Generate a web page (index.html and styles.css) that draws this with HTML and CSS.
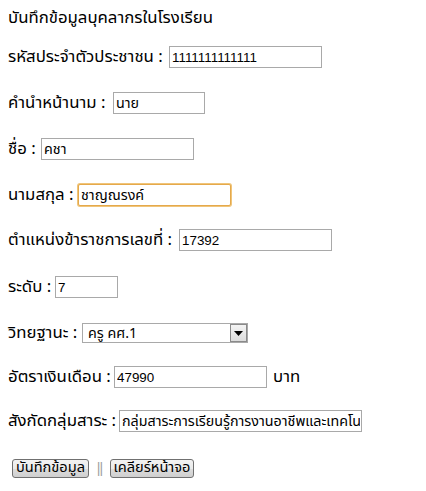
FILE: index.html
```html
<!DOCTYPE html>
<html lang="th">
<head>
<meta charset="utf-8">
<title>บันทึกข้อมูลบุคลากร</title>
<link rel="stylesheet" href="styles.css">
</head>
<body>
<form class="form">
  <div class="title">บันทึกข้อมูลบุคลากรในโรงเรียน</div>
  <div class="row r1"><span class="label l1">รหัสประจำตัวประชาชน :</span><input class="field num w153" type="text" value="1111111111111"></div>
  <div class="row r2"><span class="label l2">คำนำหน้านาม :</span><input class="field thai w92" type="text" value="นาย"></div>
  <div class="row r3"><span class="label l3">ชื่อ :</span><input class="field thai w153" type="text" value="คชา"></div>
  <div class="row r4"><span class="label l4">นามสกุล :</span><input class="field thai w153 focus" type="text" value="ชาญณรงค์"></div>
  <div class="row r5"><span class="label l5">ตำแหน่งข้าราชการเลขที่ :</span><input class="field num w153" type="text" value="17392"></div>
  <div class="row r6"><span class="label l6">ระดับ :</span><input class="field num w63" type="text" value="7"></div>
  <div class="row r7"><span class="label l7">วิทยฐานะ :</span>
    <div class="select"><span class="sel-text">ครู คศ.1</span><span class="sel-btn"><svg width="9" height="5" viewBox="0 0 9 5"><path d="M0 0H9L4.5 5Z" fill="#000"/></svg></span></div>
  </div>
  <div class="row r8"><span class="label l8">อัตราเงินเดือน :</span><input class="field num w153" type="text" value="47990"><span class="unit">บาท</span></div>
  <div class="row r9"><span class="label l9">สังกัดกลุ่มสาระ :</span><input class="field thai w243" type="text" value="กลุ่มสาระการเรียนรู้การงานอาชีพและเทคโนโลยี"></div>
  <div class="row buttons"><button type="button" class="btn b1">บันทึกข้อมูล</button><span class="sep">||</span><button type="button" class="btn b2">เคลียร์หน้าจอ</button></div>
</form>
</body>
</html>
```
FILE: styles.css
```css
html, body {
  margin: 0;
  padding: 0;
  background: #fff;
}
body {
  font-family: Tahoma, "Noto Sans Thai", "Noto Sans", "DejaVu Sans", sans-serif;
  font-size: 16.8px;
  color: #000;
}
.form {
  display: flex;
  flex-direction: column;
  padding: 7px 8px 0 8px;
}
.title {
  height: 22px;
  line-height: 22px;
  margin-bottom: 17px;
  white-space: nowrap;
}
.row {
  display: flex;
  align-items: center;
  height: 22px;
  margin-bottom: 24px;
  white-space: nowrap;
}
.r5 { margin-top: -1px; }
.r6 { margin-top: 1px; }
.r8 { margin-top: -2px; margin-bottom: 22px; }
.r9 { margin-bottom: 25px; }
.label { display: block; flex: none; }
.l1 { width: 161px; }
.l2 { width: 105px; }
.l3 { width: 33px; }
.l4 { width: 70px; }
.l5 { width: 171px; }
.l6 { width: 47px; }
.l7 { width: 74px; }
.l8 { width: 106px; }
.l9 { width: 111px; }
.field {
  box-sizing: border-box;
  height: 22px;
  margin: 0;
  padding: 0 1px 0 2px;
  border: 1px solid #a9a9a9;
  color: #000;
  background: #fff;
  outline: none;
}
.num {
  font-family: "Liberation Sans", Arial, sans-serif;
  font-size: 13.4px;
}
.thai {
  font-family: Tahoma, "Noto Sans Thai", "Noto Sans", sans-serif;
  font-size: 14.3px;
}
.w153 { width: 153px; }
.w92 { width: 92px; }
.w63 { width: 63px; }
.w243 { width: 243px; }
.focus {
  border: 1px solid #e5a94b;
  box-shadow: 0 0 0 1px #f0c57a;
  border-radius: 2px;
}
.select {
  box-sizing: border-box;
  display: flex;
  align-items: center;
  width: 166px;
  height: 20px;
  border: 1px solid #a9a9a9;
  background: #fff;
  font-size: 14.3px;
}
.sel-text {
  flex: 1;
  padding-left: 5px;
}
.sel-btn {
  box-sizing: border-box;
  width: 17px;
  height: 18px;
  display: flex;
  align-items: center;
  justify-content: center;
  border: 1px solid #8a8a8a;
  background: linear-gradient(#f4f4f4, #dcdcdc);
}
.unit {
  margin-left: 6px;
}
.buttons {
  padding-left: 4px;
}
.btn {
  box-sizing: border-box;
  height: 19px;
  margin: 0;
  padding: 0;
  border: 1px solid #707070;
  border-radius: 3px;
  background: linear-gradient(#f2f2f2, #ebebeb 50%, #dddddd 51%, #cfcfcf);
  font-family: Tahoma, "Noto Sans Thai", "Noto Sans", sans-serif;
  font-size: 14.6px;
  color: #000;
  line-height: 17px;
  text-align: center;
}
.b1 { width: 77px; }
.b2 { width: 84px; }
.sep {
  width: 21px;
  text-align: center;
  color: #a0a0a0;
  font-family: "Liberation Sans", Arial, sans-serif;
  font-size: 14px;
  letter-spacing: -1px;
}
```
